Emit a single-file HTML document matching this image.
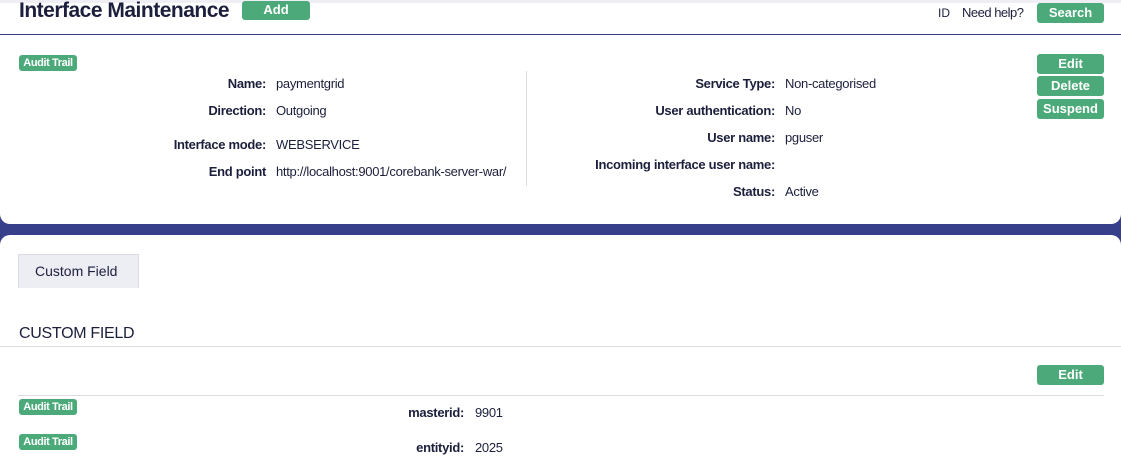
<!DOCTYPE html>
<html><head><style>
*{margin:0;padding:0;box-sizing:border-box}
body{width:1121px;height:473px;position:relative;overflow:hidden;background:#373f8a;font-family:"Liberation Sans",sans-serif;color:#1c1f3c}
.a{position:absolute;white-space:nowrap}
.btn{position:absolute;background:#4caa7a;color:#fff;font-weight:bold;font-size:13px;text-align:center;border-radius:3px;line-height:20px}
.badge{position:absolute;background:#4caa7a;color:#fff;font-weight:bold;font-size:11px;border-radius:3px;width:58px;height:16px;line-height:16px;text-align:center;letter-spacing:-0.4px}
.l{position:absolute;font-weight:bold;font-size:13px;text-align:right;letter-spacing:-0.3px;line-height:16px}
.v{position:absolute;font-size:13px;line-height:16px;letter-spacing:-0.3px}
</style></head><body>
<div class="a" style="left:0;top:0;width:1121px;height:224px;background:#fff;border-radius:0 0 10px 10px"></div>
<div class="a" style="left:0;top:0;width:1121px;height:3px;background:#eeeef4"></div>
<div class="a" style="left:0;top:34px;width:1121px;height:1px;background:#373f8a"></div>
<div class="a" style="left:19px;top:-2px;font-size:21px;font-weight:bold;letter-spacing:-0.5px;line-height:26px">Interface Maintenance</div>
<div class="btn" style="left:242px;top:1px;width:68px;height:19px;line-height:17px">Add</div>
<div class="a" style="left:938px;top:6px;font-size:12px">ID</div>
<div class="a" style="left:962px;top:5px;font-size:13px;letter-spacing:-0.5px">Need help?</div>
<div class="btn" style="left:1037px;top:3px;width:67px;height:20px">Search</div>
<div class="badge" style="left:19px;top:55px">Audit Trail</div>
<div class="a" style="left:526px;top:71px;width:1px;height:115px;background:#ddd"></div>
<div class="l" style="right:855px;top:76px">Name:</div><div class="v" style="left:276px;top:76px">paymentgrid</div>
<div class="l" style="right:855px;top:103px">Direction:</div><div class="v" style="left:276px;top:103px">Outgoing</div>
<div class="l" style="right:855px;top:137px">Interface mode:</div><div class="v" style="left:276px;top:137px">WEBSERVICE</div>
<div class="l" style="right:855px;top:164px">End point</div><div class="v" style="left:276px;top:164px">http://localhost:9001/corebank-server-war/</div>
<div class="l" style="right:346px;top:76px">Service Type:</div><div class="v" style="left:785px;top:76px">Non-categorised</div>
<div class="l" style="right:346px;top:103px">User authentication:</div><div class="v" style="left:785px;top:103px">No</div>
<div class="l" style="right:346px;top:130px">User name:</div><div class="v" style="left:785px;top:130px">pguser</div>
<div class="l" style="right:346px;top:157px">Incoming interface user name:</div>
<div class="l" style="right:346px;top:184px">Status:</div><div class="v" style="left:785px;top:184px">Active</div>
<div class="btn" style="left:1037px;top:54px;width:67px;height:20px">Edit</div>
<div class="btn" style="left:1037px;top:76px;width:67px;height:20px">Delete</div>
<div class="btn" style="left:1037px;top:99px;width:67px;height:20px">Suspend</div>
<div class="a" style="left:0;top:235px;width:1121px;height:238px;background:#fff;border-radius:10px 10px 0 0"></div>
<div class="a" style="left:18px;top:254px;width:121px;height:34px;background:#ededf4;border:1px solid #dcdce4;border-bottom:none;font-size:14px;line-height:33px;padding-left:16px">Custom Field</div>
<div class="a" style="left:19px;top:325px;font-size:16px;line-height:18px;letter-spacing:-0.3px">CUSTOM FIELD</div>
<div class="a" style="left:0;top:346px;width:1121px;height:1px;background:#ddd"></div>
<div class="btn" style="left:1037px;top:365px;width:67px;height:20px">Edit</div>
<div class="a" style="left:18px;top:395px;width:1086px;height:1px;background:#ddd"></div>
<div class="badge" style="left:19px;top:399px">Audit Trail</div>
<div class="badge" style="left:19px;top:434px">Audit Trail</div>
<div class="l" style="right:657px;top:405px">masterid:</div><div class="v" style="left:475px;top:405px">9901</div>
<div class="l" style="right:657px;top:440px">entityid:</div><div class="v" style="left:475px;top:440px">2025</div>
</body></html>
